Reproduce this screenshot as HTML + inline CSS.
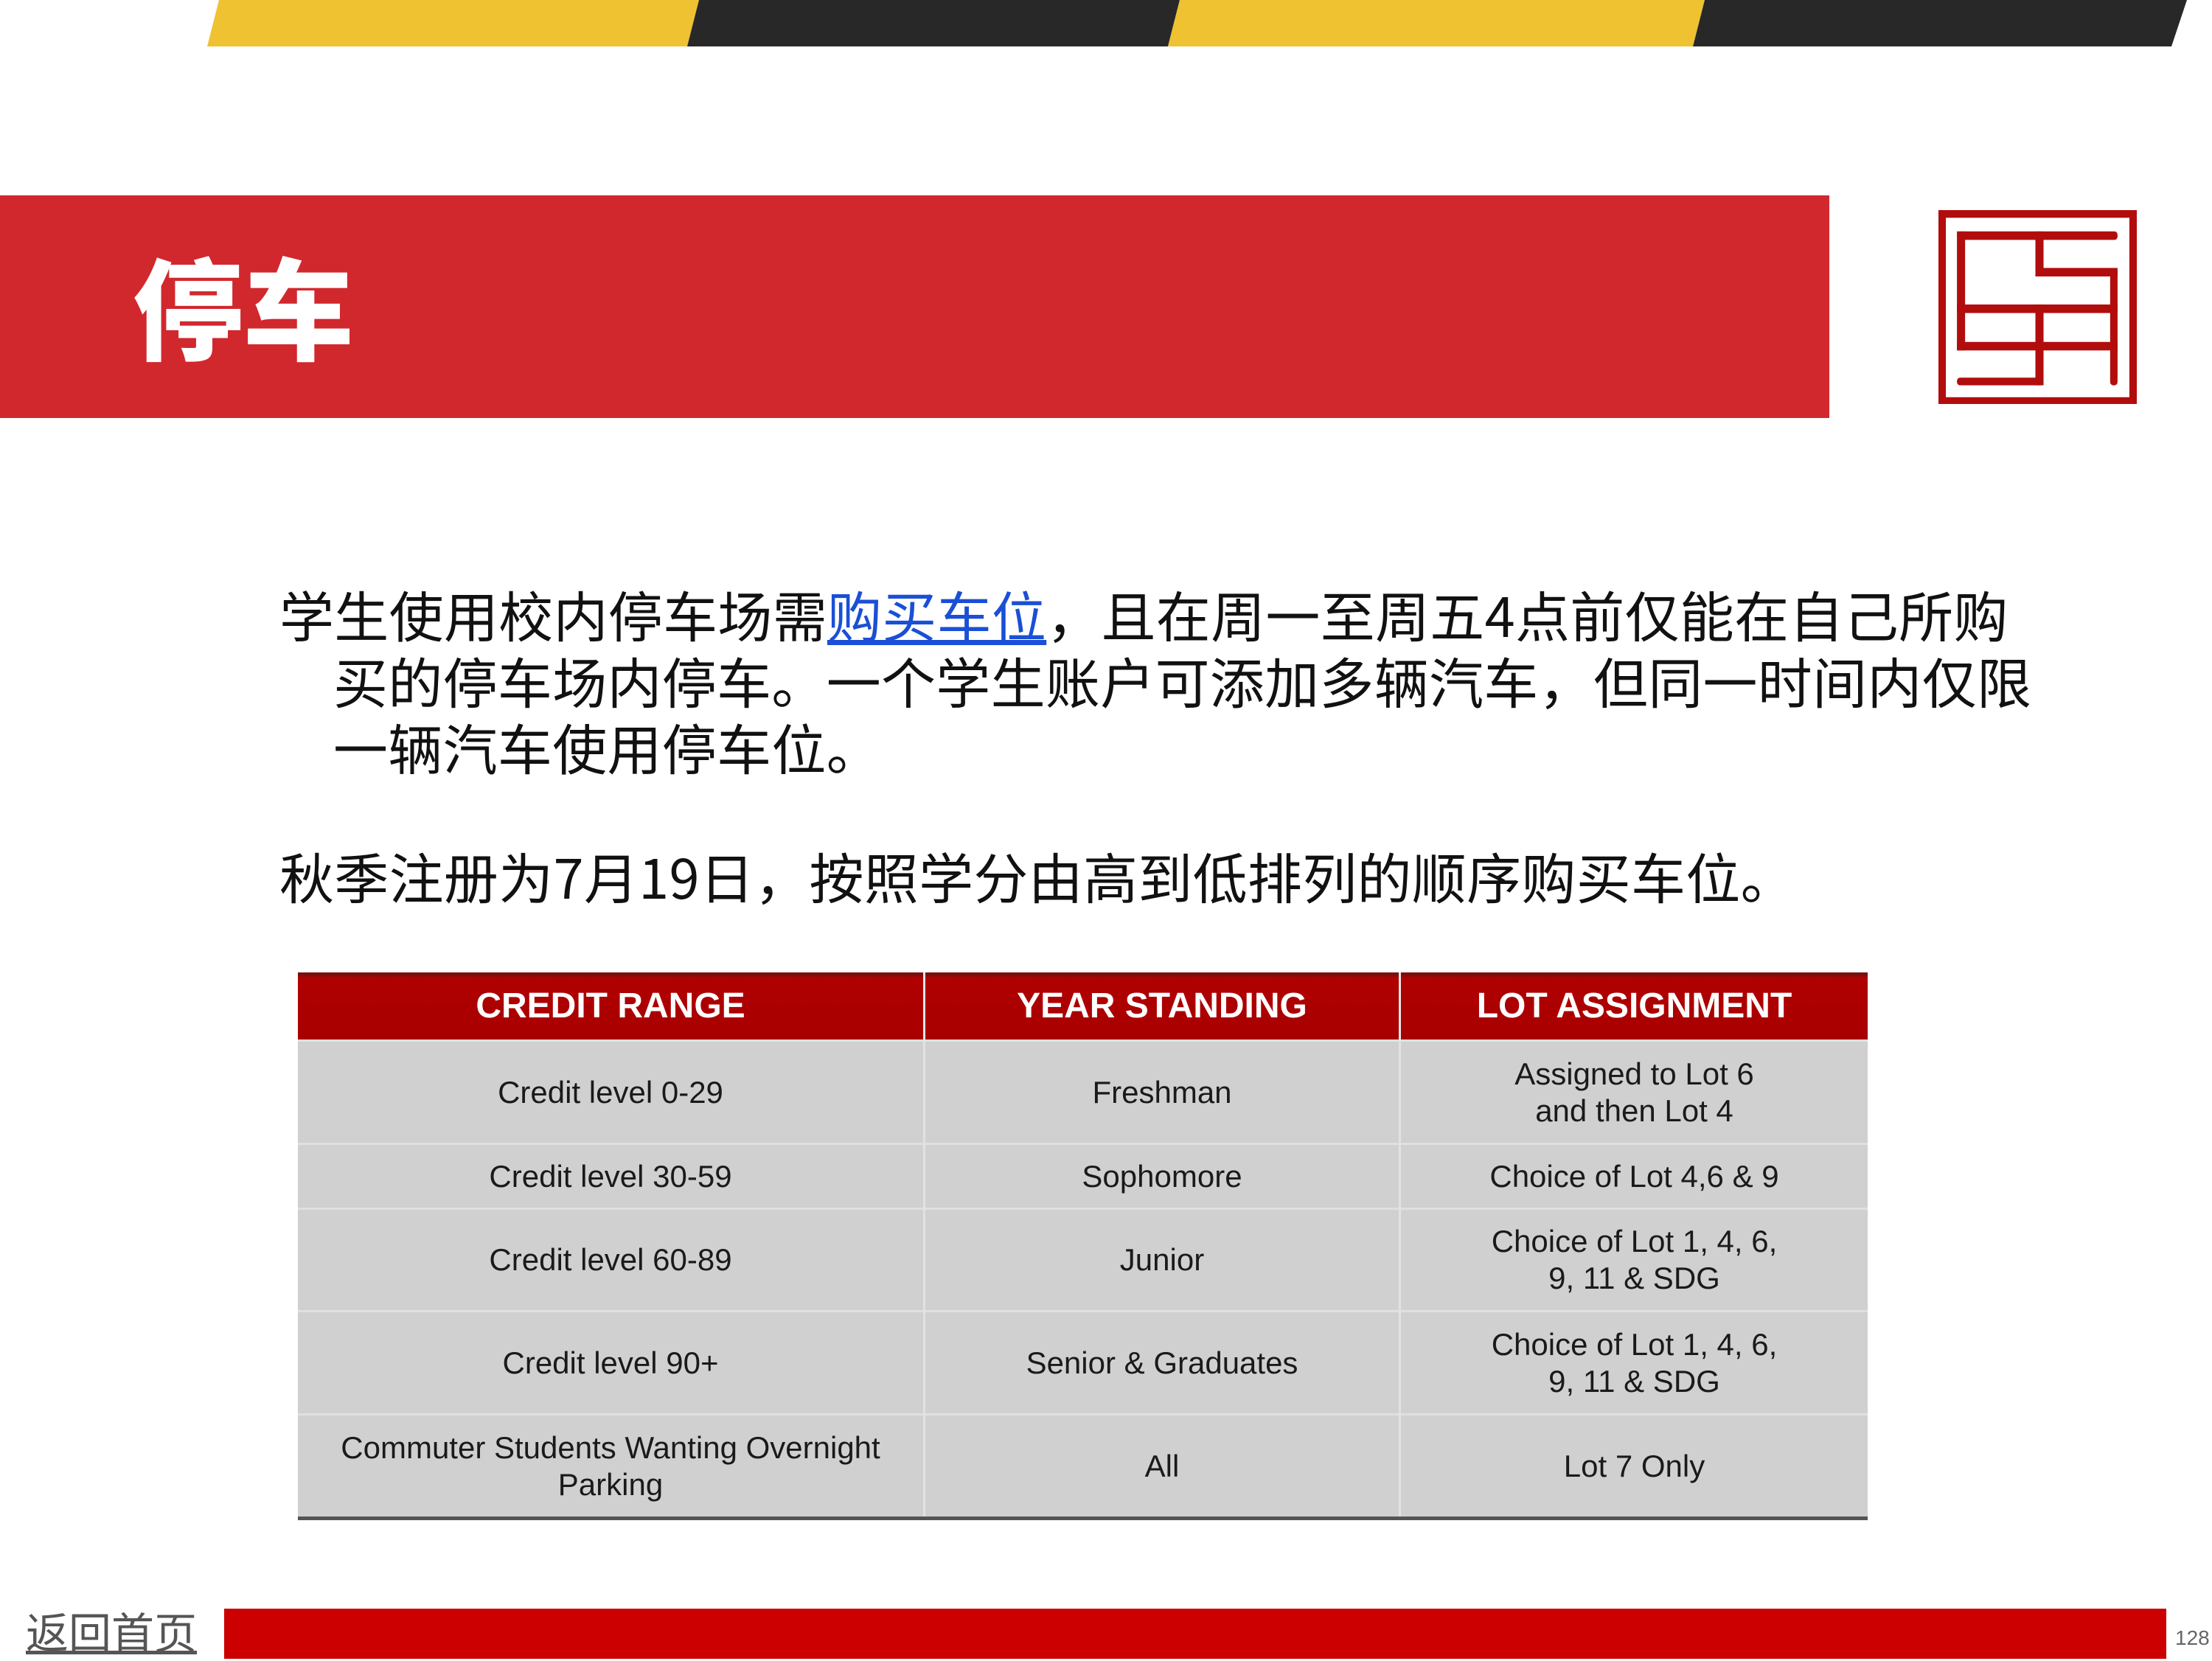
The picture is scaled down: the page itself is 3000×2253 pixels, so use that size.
<!DOCTYPE html>
<html><head><meta charset="utf-8"><style>
html,body{margin:0;padding:0}
body{width:3000px;height:2250px;position:relative;background:#fff;overflow:hidden;font-family:"Liberation Sans","Noto Sans CJK SC",sans-serif}
.abs{position:absolute}
.p{position:absolute;font-family:"Noto Sans CJK SC","WenQuanYi Zen Hei",sans-serif;font-size:74px;letter-spacing:0.3px;color:#111;white-space:nowrap;line-height:90px}
table{position:absolute;left:404px;top:1319px;width:2129px;border-collapse:collapse;font-family:"Liberation Sans",sans-serif}
td,th{text-align:center;padding:0;border-left:3px solid #e2e2e2}
td:first-child,th:first-child{border-left:none}
th{background:linear-gradient(#7a1010 0,#7a1010 5px,#b00000 6px,#a80000 100%);color:#fff;font-size:48px;font-weight:bold;height:91px;border-left:3px solid #e6e6e6}
td{background:#d0d0d0;color:#1a1a1a;font-size:42px;line-height:50px;border-top:3px solid #e0e0e0}
tr:last-child td{border-bottom:5px solid #555}
</style></head><body>
<svg class="abs" style="left:0;top:0" width="3000" height="64">
<polygon points="297,0 948,0 932,63 281,63" fill="#efc232"/>
<polygon points="948,0 1600,0 1584,63 932,63" fill="#282828"/>
<polygon points="1600,0 2312,0 2296,63 1584,63" fill="#efc232"/>
<polygon points="2312,0 2966,0 2945,63 2296,63" fill="#282828"/>
</svg>
<div class="abs" style="left:0;top:265px;width:2481px;height:302px;background:#d1282e"></div>
<div class="abs" style="left:180px;top:318px;font-family:'Noto Sans CJK SC',sans-serif;font-weight:900;font-size:150px;color:#fff;line-height:190px">停车</div>
<svg class="abs" style="left:2629px;top:285px" width="269" height="263" viewBox="0 0 268 228" preserveAspectRatio="none">
<g fill="#b20d0d">
<rect x="0" y="0" width="268" height="228"/>
<rect x="10" y="9" width="248" height="211" fill="#fff"/>
<rect x="25" y="25" width="217" height="10" rx="4"/>
<rect x="25" y="25" width="11" height="140"/>
<rect x="131" y="25" width="11" height="53"/>
<rect x="131" y="68" width="111" height="10"/>
<rect x="232" y="68" width="10" height="138" rx="4"/>
<rect x="25" y="111" width="217" height="10"/>
<rect x="25" y="155" width="217" height="10"/>
<rect x="131" y="111" width="11" height="95"/>
<rect x="25" y="197" width="117" height="9" rx="4"/>
</g></svg>
<div class="p" style="left:379px;top:788px">学生使用校内停车场需<span style="color:#1a4fd6;text-decoration:underline">购买车位</span>，且在周一至周五4点前仅能在自己所购</div>
<div class="p" style="left:452px;top:878px">买的停车场内停车。一个学生账户可添加多辆汽车，但同一时间内仅限</div>
<div class="p" style="left:452px;top:968px">一辆汽车使用停车位。</div>
<div class="p" style="left:379px;top:1143px">秋季注册为7月19日，按照学分由高到低排列的顺序购买车位。</div>
<table>
<tr><th style="width:848px">CREDIT RANGE</th><th style="width:642px">YEAR STANDING</th><th>LOT ASSIGNMENT</th></tr>
<tr style="height:140px"><td>Credit level 0-29</td><td>Freshman</td><td>Assigned to Lot 6<br>and then Lot 4</td></tr>
<tr style="height:88px"><td>Credit level 30-59</td><td>Sophomore</td><td>Choice of Lot 4,6 &amp; 9</td></tr>
<tr style="height:139px"><td>Credit level 60-89</td><td>Junior</td><td>Choice of Lot 1, 4, 6,<br>9, 11 &amp; SDG</td></tr>
<tr style="height:140px"><td>Credit level 90+</td><td>Senior &amp; Graduates</td><td>Choice of Lot 1, 4, 6,<br>9, 11 &amp; SDG</td></tr>
<tr style="height:141px"><td>Commuter Students Wanting Overnight<br>Parking</td><td>All</td><td>Lot 7 Only</td></tr>
</table>
<div class="abs" style="left:304px;top:2182px;width:2634px;height:68px;background:#cc0000"></div>
<div class="abs" style="left:35px;top:2176px;font-family:'Noto Sans CJK SC',sans-serif;font-size:58px;line-height:70px;color:#555;text-decoration:underline">返回首页</div>
<div class="abs" style="left:2950px;top:2206px;font-size:28px;color:#666">128</div>
</body></html>
